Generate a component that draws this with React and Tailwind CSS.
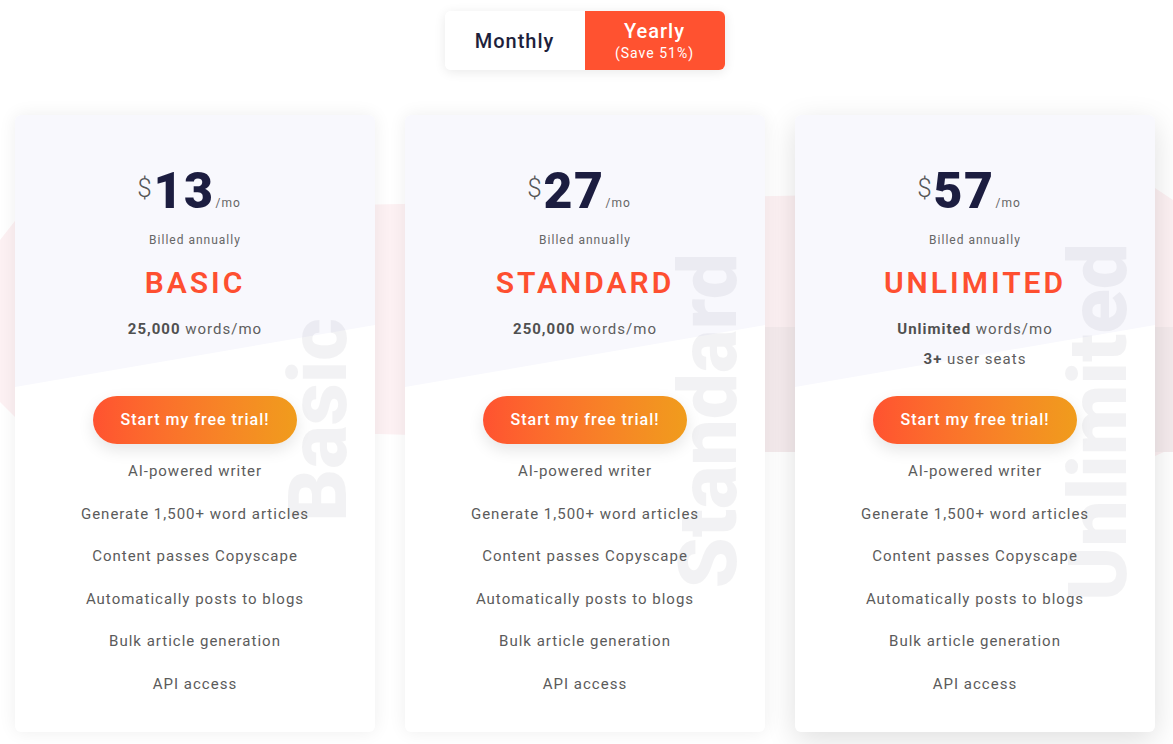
import React from "react";

const features = [
  "AI-powered writer",
  "Generate 1,500+ word articles",
  "Content passes Copyscape",
  "Automatically posts to blogs",
  "Bulk article generation",
  "API access",
];

const plans = [
  {
    price: "13",
    name: "BASIC",
    lines: [["25,000", " words/mo"]],
    side: "Basic",
    sideTop: "top-[203px]",
    shadow: "shadow-[0_0_18px_rgba(0,0,0,0.07)]",
  },
  {
    price: "27",
    name: "STANDARD",
    lines: [["250,000", " words/mo"]],
    side: "Standard",
    sideTop: "top-[138px]",
    shadow: "shadow-[0_0_18px_rgba(0,0,0,0.07)]",
  },
  {
    price: "57",
    name: "UNLIMITED",
    lines: [
      ["Unlimited", " words/mo"],
      ["3+", " user seats"],
    ],
    side: "Unlimited",
    sideTop: "top-[128px]",
    shadow: "shadow-[0_8px_30px_rgba(0,0,0,0.13)]",
  },
];

function Card({ plan }) {
  return (
    <div
      className={`relative h-[617px] w-[360px] shrink-0 overflow-hidden rounded-md bg-white ${plan.shadow}`}
    >
      <div className="absolute inset-0 bg-[#f8f8fd] [clip-path:polygon(0_0,100%_0,100%_210px,0_272px)]" />
      <div className={`absolute right-[16px] ${plan.sideTop}`}>
        <span className="block rotate-180 text-[82px] font-black leading-none text-[rgba(0,0,30,0.05)] [writing-mode:vertical-rl]">
          {plan.side}
        </span>
      </div>
      <div className="relative flex flex-col items-center">
        <div className="flex h-[281px] flex-col items-center pt-[51px]">
          <div className="mr-[12px] flex items-start">
            <span className="mt-[9px] text-[26px] font-light leading-none text-[#555]">$</span>
            <span className="ml-[2px] text-[50px] font-black leading-none tracking-[1.5px] text-[#1c1d40]">
              {plan.price}
            </span>
            <span className="ml-[1px] mt-[31px] text-[12px] leading-none tracking-[1px] text-[#666]">
              /mo
            </span>
          </div>
          <div className="mt-[16px] text-[12px] leading-[16px] tracking-[1px] text-[#666]">
            Billed annually
          </div>
          <div className="mt-[17px] text-[30px] font-semibold leading-[36px] tracking-[3px] text-[#fe4f30]">
            {plan.name}
          </div>
          <div className="mt-[18px] flex flex-col items-center gap-[10px]">
            {plan.lines.map(([b, r]) => (
              <div key={b} className="text-[15px] leading-[20px] tracking-[1px] text-[#5e5e5e]">
                <span className="font-bold text-[#505050]">{b}</span>
                {r}
              </div>
            ))}
          </div>
        </div>
        <button className="flex h-[48px] w-[204px] items-center justify-center rounded-full bg-linear-to-r from-[#ff5230] to-[#f09c1c] text-[16px] font-medium tracking-[1px] text-white shadow-[0_6px_16px_rgba(0,0,0,0.1)]">
          Start my free trial!
        </button>
        <div className="mt-[6px] flex flex-col items-center">
          {features.map((f) => (
            <div key={f} className="text-[15px] leading-[42.6px] tracking-[1px] text-[#5b5b5b]">
              {f}
            </div>
          ))}
        </div>
      </div>
    </div>
  );
}

export default function App() {
  return (
    <div className="relative min-h-[744px] w-[1173px] overflow-hidden bg-white font-['Roboto','Liberation_Sans',sans-serif]">
      <svg
        className="absolute left-0 top-0"
        width="1173"
        height="744"
        viewBox="0 0 1173 744"
      >
        <polygon
          points="0,240 22,212 1155,188 1173,200 1173,448 1155,456 22,424 0,402"
          fill="#fdf1f3"
        />
        <rect x="765" y="327" width="408" height="125" fill="#f5ebed" />
      </svg>
      <div className="relative flex justify-center pr-[4px] pt-[11px]">
        <div className="flex h-[59px] w-[280px] overflow-hidden rounded-md shadow-[0_2px_12px_rgba(0,0,0,0.09)]">
          <div className="flex w-[140px] items-center justify-center bg-white text-[20px] font-medium tracking-[1px] text-[#1e1f3c]">
            Monthly
          </div>
          <div className="flex w-[140px] flex-col items-center justify-center gap-[3px] bg-[#ff5230] text-white">
            <span className="text-[20px] font-medium leading-[22px] tracking-[1px]">Yearly</span>
            <span className="text-[14px] leading-[16px] tracking-[1px]">(Save 51%)</span>
          </div>
        </div>
      </div>
      <div className="relative mt-[45px] flex gap-[30px] pl-[15px]">
        {plans.map((p) => (
          <Card key={p.name} plan={p} />
        ))}
      </div>
    </div>
  );
}
